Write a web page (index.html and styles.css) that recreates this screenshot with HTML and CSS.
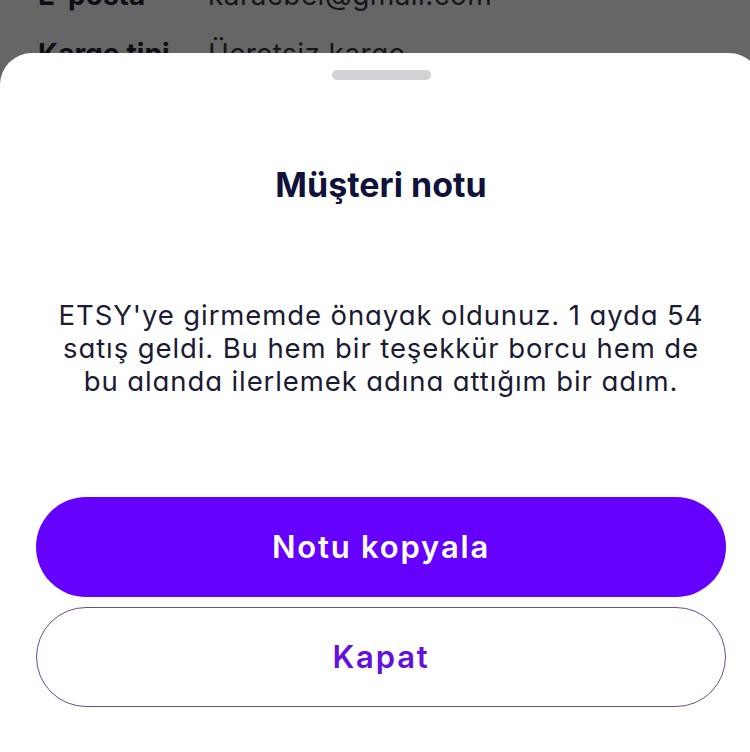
FILE: index.html
```html
<!DOCTYPE html>
<html lang="tr">
<head>
<meta charset="utf-8">
<title>Müşteri notu</title>
<link rel="stylesheet" href="styles.css">
</head>
<body>
<div class="backdrop">
  <div class="rows">
    <div class="row"><span class="label">E-posta</span><span class="value">karacbel@gmail.com</span></div>
    <div class="row"><span class="label">Kargo tipi</span><span class="value">Ücretsiz kargo</span></div>
  </div>
</div>
<div class="sheet">
  <div class="handle"></div>
  <h1 class="title">Müşteri notu</h1>
  <p class="note">ETSY'ye girmemde önayak oldunuz. 1 ayda 54 satış geldi. Bu hem bir teşekkür borcu hem de bu alanda ilerlemek adına attığım bir adım.</p>
  <div class="actions">
    <button class="btn btn-primary">Notu kopyala</button>
    <button class="btn btn-outline">Kapat</button>
  </div>
</div>
</body>
</html>
```
FILE: styles.css
```css
html, body {
  margin: 0;
  padding: 0;
}
body {
  background: #666666;
  font-family: Inter, "Noto Sans", sans-serif;
  width: 750px;
  height: 752px;
  overflow: hidden;
}
.backdrop {
  height: 53px;
  overflow: hidden;
}
.rows {
  margin-top: -34.5px;
  padding-left: 38px;
}
.row {
  display: flex;
  height: 59px;
  line-height: 59px;
  font-size: 28px;
  color: #0e0e16;
}
.label {
  width: 170px;
  font-weight: 700;
}
.value {
  font-weight: 400;
  color: #15151c;
  letter-spacing: 0.4px;
}
.sheet {
  background: #ffffff;
  border-radius: 32px 32px 0 0;
  margin-right: -11px;
  height: 699px;
  padding: 17px 35px 0 36px;
  box-sizing: border-box;
}
.handle {
  width: 99px;
  height: 10px;
  border-radius: 5px;
  background: #d1d1d6;
  margin: 0 auto;
}
.title {
  margin: 85px 0 0;
  font-size: 34px;
  line-height: 40px;
  font-weight: 700;
  text-align: center;
  color: #10123a;
}
.note {
  margin: 93.5px 0 0;
  padding: 0 15px;
  font-size: 27.5px;
  line-height: 33px;
  letter-spacing: 0.9px;
  text-align: center;
  color: #1b1b33;
  font-feature-settings: "cv11" 1;
}
.actions {
  margin-top: 99px;
  display: flex;
  flex-direction: column;
  gap: 10px;
}
.btn {
  height: 100px;
  border-radius: 50px;
  font-family: inherit;
  font-size: 31px;
  font-weight: 600;
  letter-spacing: 1.8px;
  cursor: pointer;
}
.btn-primary {
  background: #6500ff;
  color: #ffffff;
  border: none;
}
.btn-outline {
  background: #ffffff;
  color: #6410e0;
  border: 1px solid #6e4b8a;
}
```
